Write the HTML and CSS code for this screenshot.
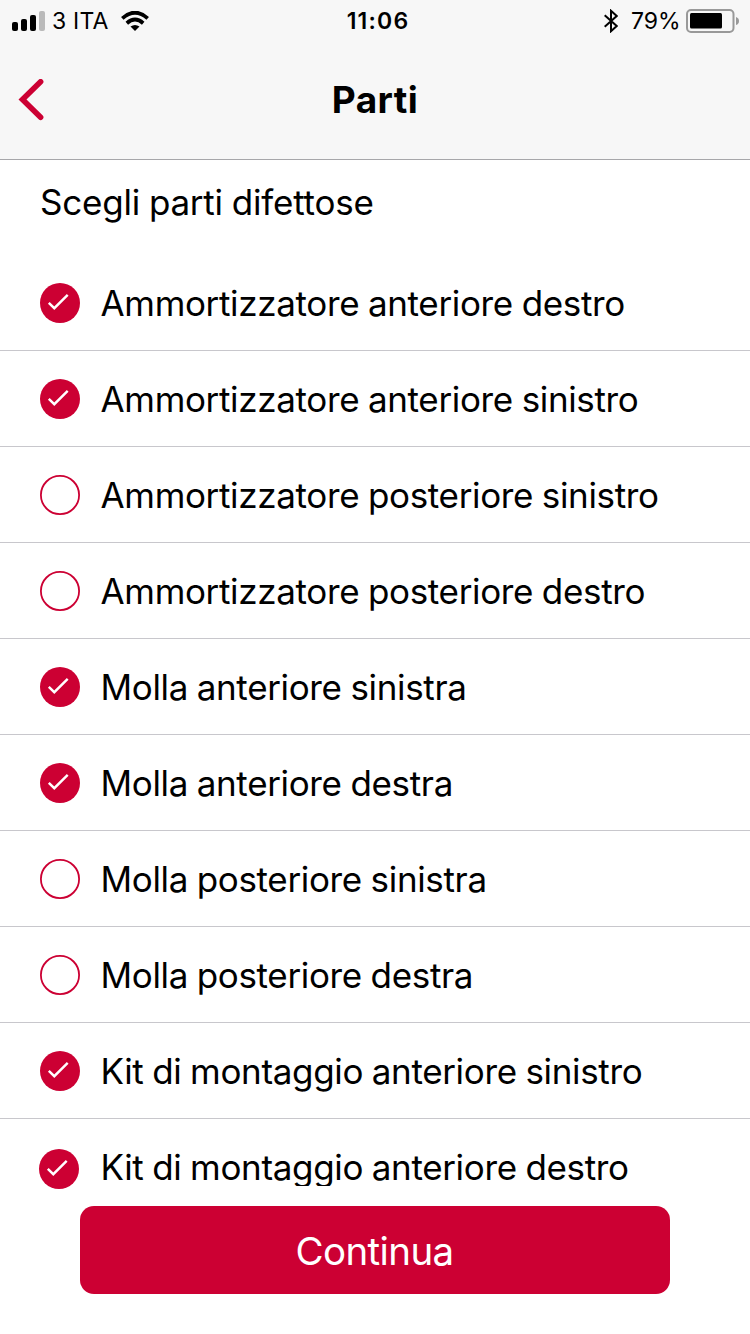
FILE: index.html
```html
<!DOCTYPE html>
<html lang="it">
<head>
<meta charset="utf-8">
<title>Parti</title>
<link rel="stylesheet" href="styles.css">
</head>
<body>
<svg class="defs" width="0" height="0">
  <symbol id="on" viewBox="0 0 40 40"><circle cx="20" cy="20" r="20" fill="#cc0033"/><path d="M8.8 19.8 14.3 25.2 27.7 11.8" fill="none" stroke="#fff" stroke-width="2.4"/></symbol>
  <symbol id="off" viewBox="0 0 40 40"><circle cx="20" cy="20" r="19.1" fill="#fff" stroke="#cc0033" stroke-width="1.8"/></symbol>
</svg>
<div class="screen">
  <header class="header">
    <div class="status">
      <div class="status-left">
        <svg class="signal" width="34" height="20" viewBox="0 0 34 20"><rect x="0" y="11" width="6" height="9" rx="2"/><rect x="9" y="8" width="6" height="12" rx="2"/><rect x="18" y="4" width="6" height="16" rx="2"/><rect x="27" y="0" width="6" height="20" rx="2" fill="#bababa"/></svg>
        <span class="carrier">3 ITA</span>
        <svg class="wifi" width="28" height="20" viewBox="0 0 28 20"><path d="M1.3 7.3Q14-4 26.7 7.3M5.8 12.2Q14 5 22.2 12.2" fill="none" stroke="#000" stroke-width="3.8"/><path d="M9.5 15.5Q14 12.3 18.5 15.5L14 20Z"/></svg>
      </div>
      <span class="time">11:06</span>
      <div class="status-right">
        <svg class="bluetooth" width="14" height="24" viewBox="0 0 14 24"><path d="M.7 6.2 12.7 17 7 22.2V1.8L12.7 7 .7 17.8" fill="none" stroke="#000" stroke-width="2"/></svg>
        <span class="percent">79%</span>
        <svg class="battery" width="54" height="24" viewBox="0 0 54 24"><rect x="1" y="1" width="46.5" height="22" rx="4" fill="none" stroke="#999" stroke-width="2"/><rect x="4" y="4" width="32" height="15.5" rx="1.5"/><path d="M50 8Q53 9 53 12T50 16Z" fill="#999"/></svg>
      </div>
    </div>
    <div class="nav">
      <svg class="back" width="26" height="42" viewBox="0 0 26 42"><path d="M22.6 2.8 4.5 20.5 22.6 38.3" fill="none" stroke="#cc0033" stroke-width="5.6" stroke-linecap="round"/></svg>
      <h1 class="title">Parti</h1>
    </div>
  </header>
  <main class="content">
    <h2 class="prompt">Scegli parti difettose</h2>
    <ul class="parts">
      <li class="part"><svg class="check"><use href="#on"/></svg><span class="label">Ammortizzatore anteriore destro</span></li>
      <li class="part"><svg class="check"><use href="#on"/></svg><span class="label">Ammortizzatore anteriore sinistro</span></li>
      <li class="part"><svg class="check"><use href="#off"/></svg><span class="label">Ammortizzatore posteriore sinistro</span></li>
      <li class="part"><svg class="check"><use href="#off"/></svg><span class="label">Ammortizzatore posteriore destro</span></li>
      <li class="part"><svg class="check"><use href="#on"/></svg><span class="label">Molla anteriore sinistra</span></li>
      <li class="part"><svg class="check"><use href="#on"/></svg><span class="label">Molla anteriore destra</span></li>
      <li class="part"><svg class="check"><use href="#off"/></svg><span class="label">Molla posteriore sinistra</span></li>
      <li class="part"><svg class="check"><use href="#off"/></svg><span class="label">Molla posteriore destra</span></li>
      <li class="part"><svg class="check"><use href="#on"/></svg><span class="label">Kit di montaggio anteriore sinistro</span></li>
      <li class="part part-last"><svg class="check"><use href="#on"/></svg><span class="label">Kit di montaggio anteriore destro</span></li>
    </ul>
  </main>
  <footer class="footer"><button class="continue" type="button">Continua</button></footer>
</div>
</body>
</html>
```
FILE: styles.css
```css
* { box-sizing: border-box; }
body {
  margin: 0;
  background: #fff;
  color: #000;
  font-family: Inter, "Liberation Sans", sans-serif;
}
svg { display: block; flex: none; }
.defs { display: none; }
.screen {
  width: 750px;
  height: 1334px;
  display: flex;
  flex-direction: column;
  overflow: hidden;
}
.header {
  height: 160px;
  flex: none;
  background: #f7f7f7;
  border-bottom: 1px solid #a7a7aa;
}
.status {
  height: 40px;
  display: grid;
  grid-template-columns: 1fr auto 1fr;
  align-items: center;
  padding: 1px 12px 0;
  font-size: 23px;
  line-height: 28px;
}
.status-left, .status-right { display: flex; align-items: center; }
.status-right { justify-content: flex-end; }
.carrier { width: 57px; margin-left: 6px; letter-spacing: 0.2px; white-space: nowrap; }
.wifi { margin-left: 12px; }
.time { padding-left: 6px; font-weight: 600; font-size: 23px; letter-spacing: 1.2px; }
.percent { width: 48px; margin: 0 7px 0 13px; letter-spacing: 0; white-space: nowrap; }
.battery { margin-right: -2px; }
.nav {
  height: 119px;
  display: grid;
  grid-template-columns: 1fr auto 1fr;
  align-items: center;
  padding: 0 18px;
}
.title { margin: 0; font-size: 37px; line-height: 44px; font-weight: 700; letter-spacing: 0.4px; }
.content { height: 1026px; flex: none; }
.prompt {
  margin: 0;
  height: 95px;
  padding: 20px 40px 0;
  font-size: 35px;
  line-height: 44px;
  font-weight: 400;
  letter-spacing: -0.22px;
  word-spacing: -0.7px;
}
.parts { margin: 0; padding: 0; list-style: none; }
.part {
  height: 96px;
  display: flex;
  align-items: center;
  gap: 20.5px;
  padding-left: 40px;
  border-bottom: 1px solid #c8c7cc;
}
.check { width: 40px; height: 40px; }
.label {
  font-size: 35px;
  line-height: 44px;
  letter-spacing: -0.34px;
  word-spacing: -0.8px;
  white-space: nowrap;
}
.part-last { height: 67px; align-items: flex-start; padding: 26px 0 0 39px; gap: 21.5px; border-bottom: 0; }
.part-last .check { margin-top: 4px; }
.part-last .label { clip-path: inset(0 0 3px 0); }
.footer { padding: 20px 80px 0; }
.continue {
  display: block;
  width: 590px;
  height: 88px;
  padding: 1px 1px 0 0;
  border: 0;
  border-radius: 14px;
  background: #cc0033;
  color: #fff;
  font-family: inherit;
  font-size: 38.5px;
  line-height: 44px;
  letter-spacing: -0.6px;
}
```
